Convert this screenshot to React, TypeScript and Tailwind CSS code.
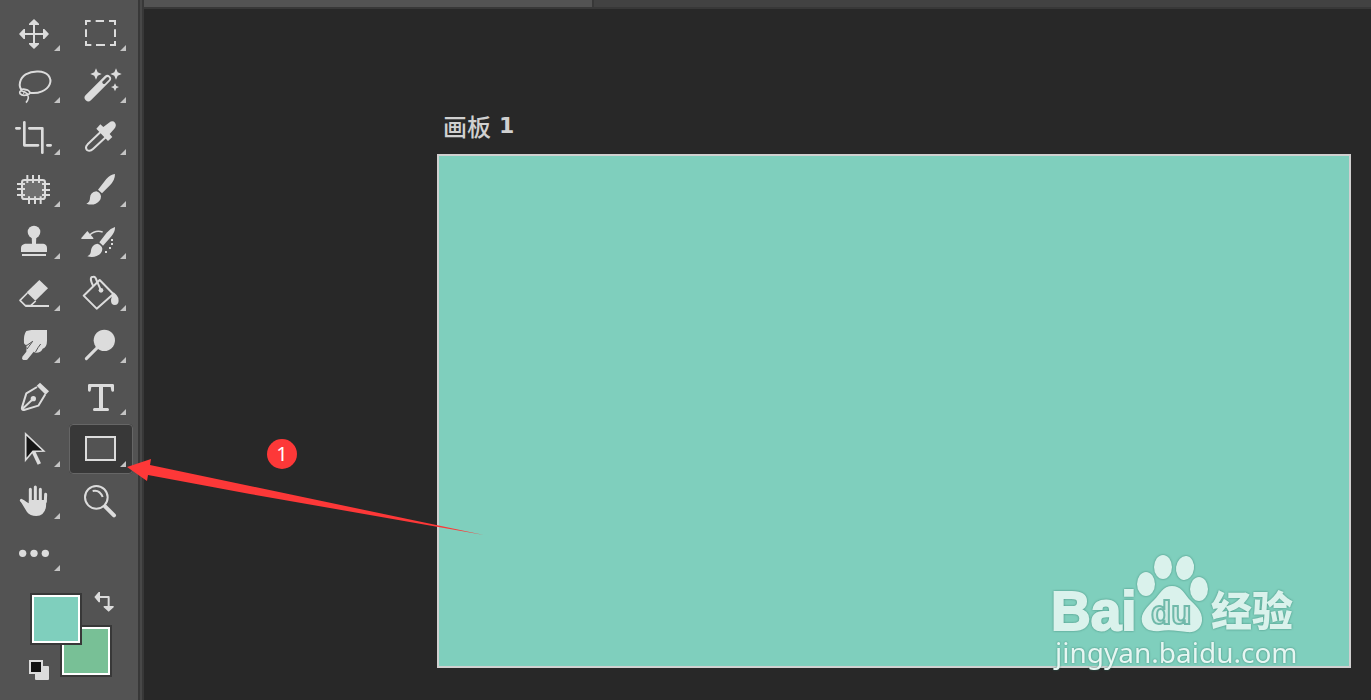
import type { ReactNode } from "react";

type Tool = {
  name: string;
  /** Origin of the icon's drawing space, three units per pixel. */
  ox: number;
  oy: number;
  art: ReactNode;
  flyout?: boolean;
  selected?: boolean;
};

const INK = "#dcdcdc";
const PANEL = "#535353";

const line = {
  fill: "none",
  stroke: INK,
  strokeWidth: 6,
  strokeLinejoin: "round" as const,
};

const tools: Tool[] = [
  {
    name: "移动工具",
    ox: 9,
    oy: 24,
    art: (
      <>
        <path d="M102 68V136M68 102H136" {...line} />
        <path d="M102 57l15 14v4H87v-4zM102 147l15-14v-4H87v4zM57 102l14-15h4v30h-4zM147 102l-14-15h-4v30h4z" fill={INK} />
      </>
    ),
  },
  {
    name: "矩形选框工具",
    ox: 207,
    oy: 24,
    art: (
      <path
        d="M258 75V63H272M287 63H312M327 63H345V75M345 88V111M345 123V135H330M315 135H288M274 135H258V123M258 111V88"
        {...line}
        strokeLinejoin="miter"
      />
    ),
  },
  {
    name: "套索工具",
    ox: 9,
    oy: 180,
    art: (
      <g {...line}>
        <path d="M65 270C55 259 58 235 77 223C99 211 132 212 145 226C159 244 148 265 126 274C112 280 98 280 88 278" />
        <path d="M62 270C70 265 87 268 90 278C88 285 68 290 60 281C58 276 60 272 66 273C77 276 86 284 85 294Q84 301 78 308" strokeWidth={5} />
        <path d="M71 282Q71 269 81 270" strokeWidth={3} />
      </g>
    ),
  },
  {
    name: "魔棒工具",
    ox: 207,
    oy: 180,
    art: (
      <>
        <path d="M265 293L322 236" stroke={INK} strokeWidth={22} strokeLinecap="round" />
        <path d="M312 247L323 236" stroke={PANEL} strokeWidth={10} strokeLinecap="round" />
        <path d="M288 205l5 12 12 5-12 5-5 12-5-12-12-5 12-5zM348 205l5 12 12 5-12 5-5 12-5-12-12-5 12-5zM345 250l4 8 8 3-8 4-4 9-4-9-8-4 8-3z" fill={INK} />
      </>
    ),
  },
  {
    name: "裁剪工具",
    ox: 9,
    oy: 6,
    art: (
      <g {...line} strokeWidth={8} strokeLinecap="round">
        <path d="M73 37V106H114M49 55H59M88 55H127V128M142 106H152" />
      </g>
    ),
  },
  {
    name: "吸管工具",
    ox: 207,
    oy: 6,
    art: (
      <>
        <path d="M304 64L263 103Q254 112 261 120Q270 126 279 117L321 78" {...line} />
        <path d="M289 56l12-13 9 8 17-13q11-8 18 0 6 8-2 18l-14 16 8 9-13 12z" fill={INK} />
      </>
    ),
  },
  {
    name: "修补工具",
    ox: 9,
    oy: 162,
    art: (
      <>
        <rect x="66" y="210" width="69" height="57" rx="7" fill="#707070" stroke={INK} strokeWidth="6" />
        <path d="M82 195V219M99 195V219M117 195V219M87 259V282M105 259V282M122 259V282M51 222H75M51 237H75M51 255H75M126 222H150M126 240H150M126 255H150" {...line} />
      </>
    ),
  },
  {
    name: "画笔工具",
    ox: 207,
    oy: 162,
    art: (
      <path
        d="M345 192Q331 193 319 207L294 239L306 250L330 226Q345 210 345 192ZM289 244Q301 247 303 259Q303 274 287 281Q275 286 259 281Q270 276 270 264Q270 247 289 244Z"
        fill={INK}
      />
    ),
  },
  {
    name: "仿制图章工具",
    ox: 9,
    oy: 3,
    art: (
      <>
        <circle cx="102" cy="51" r="19" fill={INK} />
        <path d="M95 64H109L108 86H130Q141 88 141 99V111H63V99Q63 89 75 86H96ZM66 117H138V123H66Z" fill={INK} />
      </>
    ),
  },
  {
    name: "历史记录画笔工具",
    ox: 207,
    oy: 3,
    art: (
      <>
        <path d="M345 36Q331 40 320 53L298 82L309 92L333 65Q346 50 345 36ZM292 86Q305 90 307 101Q307 116 290 123Q277 129 262 124Q273 119 273 106Q275 89 292 86Z" fill={INK} />
        <path d="M269 60Q286 44 308 51" {...line} strokeWidth={4} />
        <path d="M262 48L280 69V72H244V69Z" fill={INK} />
        <path d="M333 72h6v6h-6zM333 84h6v6h-6zM327 96h6v6h-6zM315 108h6v6h-6z" fill={INK} />
      </>
    ),
  },
  {
    name: "橡皮擦工具",
    ox: 9,
    oy: 159,
    art: (
      <>
        <path d="M82 234L60 256L76 272H92L107 258" {...line} strokeWidth={5} />
        <path d="M76 273H147" {...line} />
        <path d="M118 195L144 220L106 257L80 232Z" fill={INK} />
      </>
    ),
  },
  {
    name: "油漆桶工具",
    ox: 207,
    oy: 159,
    art: (
      <>
        <path d="M299 195L340 237L290 281L251 242Z" {...line} />
        <path d="M280 214Q265 185 280 185Q287 184 290 197L302 224" {...line} />
        <circle cx="303" cy="226" r="7" fill={INK} />
        <path d="M341 232Q349 238 355 249Q359 269 345 270Q332 270 333 255Q334 243 341 232Z" fill={INK} />
      </>
    ),
  },
  {
    name: "涂抹工具",
    ox: 9,
    oy: 0,
    art: (
      <>
        <path d="M79 33L94 30H141V62Q141 82 128 86Q123 99 106 98L101 95L84 116Q82 120 78 120H70Q64 117 67 110L79 95L80 80L72 70Q70 44 79 33Z" fill={INK} />
        <path d="M73 76H81L98 64L87 79L81 87M106 97L114 83L122 72" fill="none" stroke={PANEL} strokeWidth="3" />
      </>
    ),
  },
  {
    name: "减淡工具",
    ox: 207,
    oy: 0,
    art: (
      <>
        <circle cx="313" cy="61" r="32" fill={INK} />
        <path d="M292 83L259 116" {...line} strokeWidth={9} strokeLinecap="round" />
      </>
    ),
  },
  {
    name: "钢笔工具",
    ox: 9,
    oy: 156,
    art: (
      <>
        <path d="M111 201L79 220L66 262Q64 271 72 270L115 257L136 223M67 267L99 237" {...line} />
        <circle cx="100" cy="236" r="8" fill={INK} />
        <path d="M110 197L120 188L147 214L137 224Z" fill={INK} />
      </>
    ),
  },
  {
    name: "横排文字工具",
    ox: 207,
    oy: 156,
    art: (
      <path
        d="M268 192H338Q342 192 342 196V212Q342 215 338 215Q335 215 334 212L332 201H309V264H323Q327 265 327 269Q327 273 323 273H283Q279 273 279 269Q279 265 283 264H297V201H274L272 212Q271 215 268 215Q264 215 264 211V196Q264 192 268 192Z"
        fill={INK}
      />
    ),
  },
  {
    name: "路径选择工具",
    ox: 9,
    oy: 12,
    art: (
      <>
        <path d="M98 90L118 132" stroke={INK} strokeWidth="11" />
        <path d="M77 42V120L99 94L131 93Z" fill="#161616" stroke={INK} strokeWidth="5" />
      </>
    ),
  },
  {
    name: "矩形工具",
    ox: 207,
    oy: 12,
    selected: true,
    art: <rect x="258" y="51" width="87" height="69" fill="#535353" stroke={INK} strokeWidth="6" />,
  },
  {
    name: "抓手工具",
    ox: 9,
    oy: 168,
    art: (
      <>
        <path d="M76 250L64 241M91 245V208M106 242V201M121 242V208M136 245L137 223" {...line} strokeWidth={9} strokeLinecap="round" />
        <path d="M61 243Q69 236 75 243L86 250L87 240H139L138 260Q134 287 109 288Q90 288 81 276Z" fill={INK} />
      </>
    ),
  },
  {
    name: "缩放工具",
    ox: 207,
    oy: 168,
    flyout: false,
    art: (
      <>
        <circle cx="289" cy="232" r="34" {...line} />
        <path d="M278 213Q299 208 308 231" {...line} />
        <path d="M315 259L342 286" {...line} strokeWidth={12} strokeLinecap="round" />
      </>
    ),
  },
  {
    name: "编辑工具栏",
    ox: 9,
    oy: 9,
    art: (
      <g fill={INK}>
        <circle cx="68" cy="85" r="11" />
        <circle cx="102" cy="85" r="11" />
        <circle cx="136" cy="85" r="11" />
      </g>
    ),
  },
];

function ToolButton({ tool }: { tool: Tool }) {
  return (
    <button
      type="button"
      aria-label={tool.name}
      aria-pressed={!!tool.selected}
      className={
        tool.selected
          ? "h-[50px] w-16 rounded bg-[#383838] outline-1 -outline-offset-1 outline-[#666666]"
          : "h-[50px] w-16 rounded hover:bg-[#484848]"
      }
    >
      <svg className="block h-[50px] w-16" viewBox={`${tool.ox} ${tool.oy} 192 150`} aria-hidden="true">
        {tool.art}
        {tool.flyout !== false && (
          <path d="M171 111V129H153Z" transform={`translate(${tool.ox} ${tool.oy})`} fill="#c4c4c4" />
        )}
      </svg>
    </button>
  );
}

function Swatches() {
  return (
    <div className="relative mt-3.5 ml-[26px] h-[88px] w-[86px]">
      <button
        type="button"
        aria-label="背景色"
        className="absolute top-[33px] left-[31px] size-[52px] border-2 border-[#383838] bg-[#78c096] outline-2 -outline-offset-4 outline-white"
      />
      <button
        type="button"
        aria-label="前景色"
        className="absolute top-px left-px size-[52px] border-2 border-[#383838] bg-[#7fcfbd] outline-2 -outline-offset-4 outline-white"
      />
      <button type="button" aria-label="切换前景色和背景色" className="absolute top-0 right-px size-5">
        <svg viewBox="0 0 60 60" className="block size-5" aria-hidden="true">
          <path d="M14 15H44V44" {...line} />
          <path d="M1 15L14 0H18V31H14ZM29 42H59V46L44 59L29 46Z" fill={INK} />
        </svg>
      </button>
      <button type="button" aria-label="默认前景色和背景色" className="absolute bottom-0 left-0 size-5">
        <svg viewBox="0 0 20 20" className="block size-5" aria-hidden="true">
          <rect x="6" y="6" width="14" height="14" rx="1" fill={INK} />
          <rect x="1" y="1" width="12" height="12" fill="#101010" stroke={INK} strokeWidth="2" />
        </svg>
      </button>
    </div>
  );
}

function Watermark() {
  return (
    <svg
      className="absolute right-[66px] bottom-6 h-[128px] w-[260px] drop-shadow-[0_0_1px_rgba(40,110,95,0.65)]"
      viewBox="1045 548 260 128"
      role="img"
      aria-label="Baidu 经验"
    >
      <g fill="#daf2ec">
        <text x="1051" y="630" fontSize="55" fontWeight="700" fontFamily="Liberation Sans, sans-serif" stroke="#daf2ec" strokeWidth="2">
          Bai
        </text>
        <ellipse cx="1146" cy="584" rx="9" ry="12" />
        <ellipse cx="1163" cy="567" rx="9" ry="12" />
        <ellipse cx="1185" cy="568" rx="9" ry="12" transform="rotate(8 1185 568)" />
        <ellipse cx="1199" cy="589" rx="9" ry="12" />
        <path d="M1172 586C1181 586 1184 593 1189 599C1195 605 1203 611 1202 621C1201 629 1195 633 1187 632C1179 631 1169 629 1160 631C1150 632 1144 629 1142 622C1140 613 1148 606 1154 600C1160 594 1163 586 1172 586Z" />
        <text x="1211" y="626" fontSize="41" fontWeight="900" fontFamily="Noto Sans CJK SC, sans-serif">
          经验
        </text>
      </g>
      <text
        x="1151"
        y="624"
        fontSize="33"
        fontWeight="700"
        fontFamily="Liberation Sans, sans-serif"
        fill="#d0ebe4"
        stroke="#70b9aa"
        strokeWidth="2"
      >
        du
      </text>
      <text x="1055" y="663" fontSize="28" fontFamily="Noto Sans, sans-serif" fill="#e6f6f2">
        jingyan.baidu.com
      </text>
    </svg>
  );
}

export default function App() {
  return (
    <div className="relative flex min-h-screen bg-[#282828] font-['Noto_Sans','Noto_Sans_CJK_SC',sans-serif]">
      <aside className="flex shrink-0 bg-[#535353]">
        <div className="pt-2 pr-[5px] pl-[3px]">
          <div className="grid grid-cols-2 gap-0.5">
            {tools.map((tool) => (
              <ToolButton key={tool.name} tool={tool} />
            ))}
          </div>
          <Swatches />
        </div>
        <div className="w-1.5 border-x-2 border-[#383838] bg-[#484848]" />
      </aside>
      <main className="flex min-w-0 flex-1 flex-col">
        <div className="flex h-[9px] border-b-2 border-[#383838] bg-[#424242]">
          <div className="w-[450px] border-r-2 border-[#383838] bg-[#535353]" />
        </div>
        <section className="flex flex-1 flex-col pr-5 pb-8 pl-[293px]">
          <h1 className="flex h-[145px] items-end gap-2 pb-3 pl-1.5 text-[#d0d0d0]">
            <span className="font-['Noto_Sans_CJK_SC',sans-serif] text-2xl leading-8 font-medium">画板</span>
            <span className="font-['DejaVu_Sans',sans-serif] text-[22px] leading-8 font-bold">1</span>
          </h1>
          <div className="relative flex-1 border-2 border-[#d0d0d0] bg-[#7fcfbd]" />
        </section>
      </main>
      <Watermark />
      <svg className="absolute top-[458px] left-[126px] h-[78px] w-[358px]" viewBox="126 458 358 78" aria-hidden="true">
        <path d="M127 467L151 459L150 465L250 486L484 535L250 494L148 475L147 481Z" fill="#fd3838" />
      </svg>
      <div className="absolute top-[439px] left-[267px] flex size-[30px] items-center justify-center rounded-full bg-[#fd3838] text-xl leading-none text-white">
        1
      </div>
    </div>
  );
}
